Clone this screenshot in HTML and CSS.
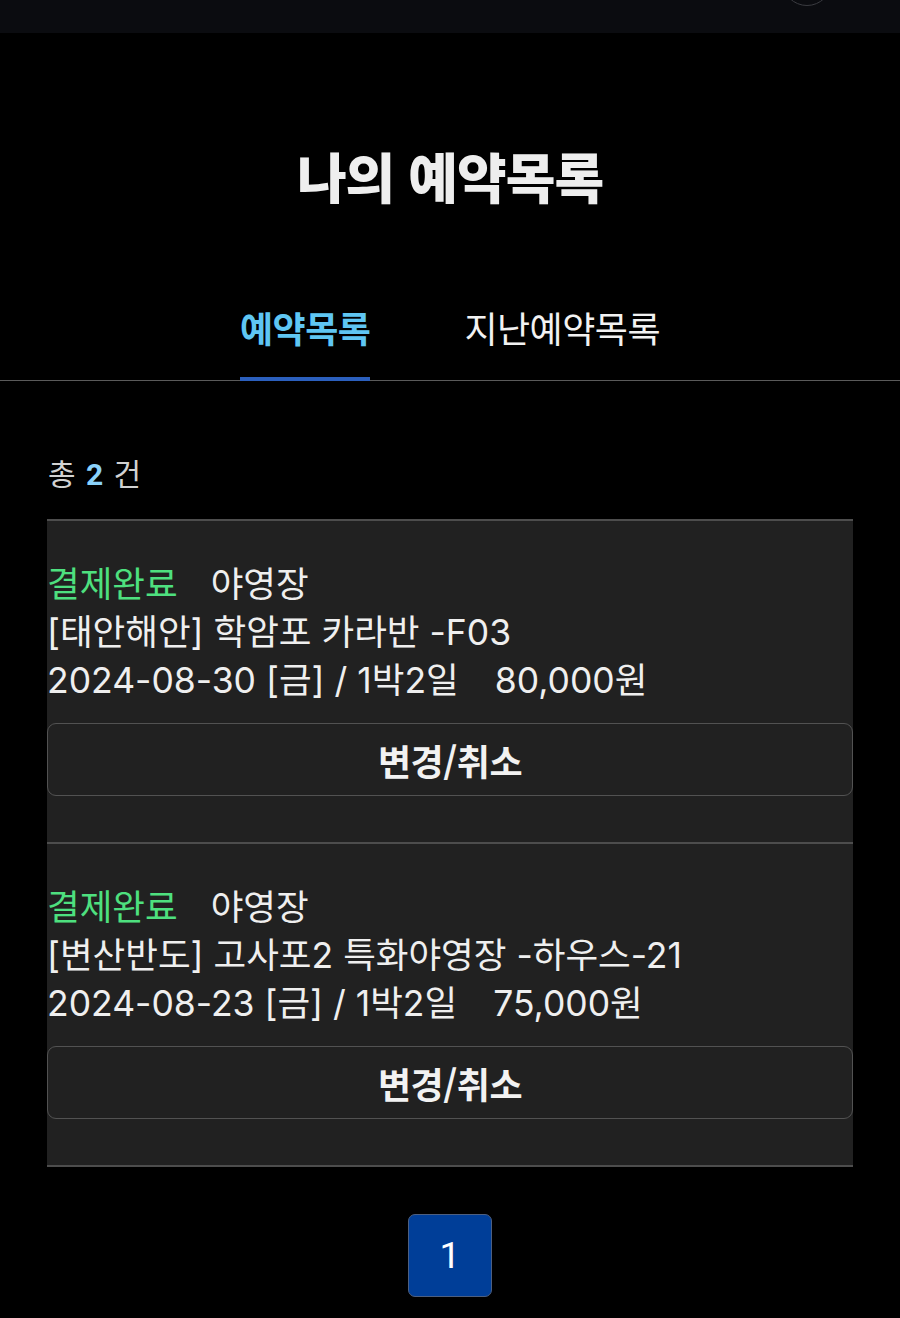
FILE: index.html
```html
<!DOCTYPE html>
<html lang="ko">
<head>
<meta charset="utf-8">
<title>나의 예약목록</title>
<link rel="stylesheet" href="styles.css">
</head>
<body>
<header class="topbar">
  <span class="avatar"></span>
</header>
<main class="page">
  <h1 class="title">나의 예약목록</h1>
  <nav class="tabs">
    <a class="tab active">예약목록</a>
    <a class="tab">지난예약목록</a>
  </nav>
  <section class="content">
    <p class="count">총 <b>2</b> 건</p>
    <ul class="list">
      <li class="card">
        <p class="line"><span class="status">결제완료</span><span class="type">야영장</span></p>
        <p class="line">[태안해안] 학암포 카라반 -F03</p>
        <p class="line">2024-08-30 [금] / 1박2일<span class="price">80,000원</span></p>
        <button class="action">변경/취소</button>
      </li>
      <li class="card">
        <p class="line"><span class="status">결제완료</span><span class="type">야영장</span></p>
        <p class="line">[변산반도] 고사포2 특화야영장 -하우스-21</p>
        <p class="line">2024-08-23 [금] / 1박2일<span class="price">75,000원</span></p>
        <button class="action">변경/취소</button>
      </li>
    </ul>
    <div class="pager">
      <a class="page-num current">1</a>
    </div>
  </section>
</main>
</body>
</html>
```

FILE: styles.css
```css
* { box-sizing: border-box; }
html, body { margin: 0; padding: 0; background: #000; }
body {
  font-family: Roboto, "Noto Sans CJK KR", sans-serif;
  color: #ececec;
  width: 900px;
  min-height: 1318px;
  overflow: hidden;
}
.topbar {
  height: 33px;
  background: #0b0c10;
  position: relative;
  overflow: hidden;
}
.avatar {
  position: absolute;
  left: 782px;
  top: -44px;
  width: 50px;
  height: 50px;
  border-radius: 50%;
  border: 1.5px solid #3a3b40;
}
.page { display: flex; flex-direction: column; }
.title {
  margin: 110px 0 0;
  text-align: center;
  font-family: "Noto Sans CJK KR", sans-serif;
  font-weight: 900;
  font-size: 54px;
  line-height: 66px;
  color: #eeeeee;
  letter-spacing: -1px;
}
.tabs {
  margin-top: 96px;
  display: flex;
  justify-content: center;
  gap: 94px;
  border-bottom: 1.5px solid #5a5a5a;
}
.tab {
  font-family: "Noto Sans CJK KR", sans-serif;
  font-size: 36px;
  line-height: 44px;
  padding-bottom: 28px;
  color: #f2f2f2;
  border-bottom: 4px solid transparent;
  margin-bottom: -1px;
  letter-spacing: -0.5px;
}
.tab.active {
  color: #5fc6f3;
  font-weight: 700;
  border-bottom-color: #2b5fbd;
}
.content { padding: 0 47px; }
.count {
  margin: 73px 0 26px 1px;
  font-family: "Noto Sans CJK KR", sans-serif;
  font-size: 30px;
  line-height: 36px;
  color: #d2d2d2;
}
.count b { color: #8ad2fb; font-weight: 700; font-family: Roboto, sans-serif; margin: 0 2px; }
.list { list-style: none; margin: 0; padding: 0; }
.card {
  background: #212121;
  border-top: 2px solid #4d4d4d;
  padding: 40px 0 46px;
  display: flex;
  flex-direction: column;
}
.card:last-child { border-bottom: 2px solid #4d4d4d; }
.line {
  margin: 0;
  font-family: Inter, "Noto Sans CJK KR", sans-serif;
  font-size: 35.5px;
  line-height: 48px;
  color: #efefef;
  white-space: nowrap;
}
.status { color: #4ee07f; margin-right: 33px; }
.price { margin-left: 36px; }
.action {
  margin-top: 18px;
  height: 73px;
  width: 100%;
  background: transparent;
  border: 1.5px solid #525252;
  border-radius: 9px;
  color: #f2f2f2;
  font-family: "Noto Sans CJK KR", sans-serif;
  font-weight: 700;
  font-size: 36px;
  letter-spacing: -0.5px;
}
.pager {
  display: flex;
  justify-content: center;
  margin-top: 47px;
}
.page-num {
  width: 84px;
  height: 83px;
  display: flex;
  align-items: center;
  justify-content: center;
  background: #003e98;
  border: 1.5px solid #4d5f80;
  border-radius: 7px;
  color: #fff;
  font-size: 37px;
}
```
